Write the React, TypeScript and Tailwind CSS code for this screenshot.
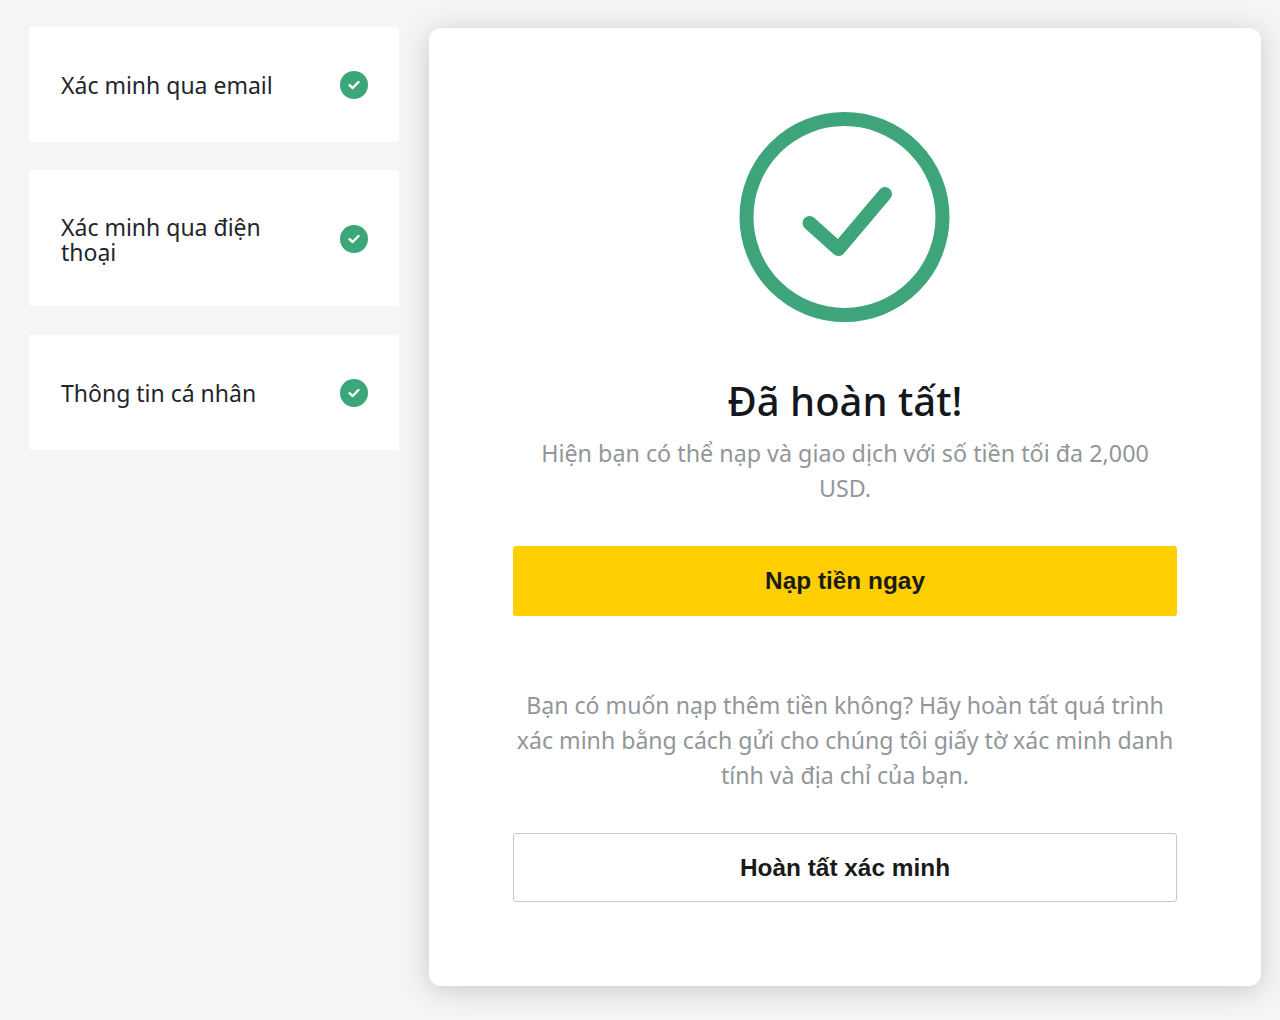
function StepCheck() {
  return (
    <svg width="28" height="28" viewBox="0 0 28 28" className="shrink-0">
      <circle cx="14" cy="14" r="14" fill="#3ba678" />
      <path d="M9.5 14.2l3.2 2.8 5.8-6" fill="none" stroke="#fff" strokeWidth="2.4" strokeLinecap="round" strokeLinejoin="round" />
    </svg>
  )
}

function StepCard({ label, className }: { label: string; className: string }) {
  return (
    <div className={`flex items-center justify-between rounded-[3px] bg-white pl-8 pr-[31px] ${className}`}>
      <span className="w-[240px] pt-[2px] text-[23px] leading-[25px] text-[#22262b]">{label}</span>
      <StepCheck />
    </div>
  )
}

export default function App() {
  return (
    <div className="flex h-[1020px] items-start gap-[30px] overflow-hidden bg-[#f3f5f7] pl-[29px] pt-[27px] font-['Noto_Sans',sans-serif]">
      <div className="flex w-[370px] flex-col">
        <StepCard label="Xác minh qua email" className="h-[115px]" />
        <StepCard label="Xác minh qua điện thoại" className="mt-[28px] h-[136px] pt-[2px]" />
        <StepCard label="Thông tin cá nhân" className="mt-[29px] h-[115px]" />
      </div>

      <div className="mt-px flex h-[958px] w-[832px] flex-col items-center rounded-xl bg-white px-[84px] pt-[84px] shadow-[0_4px_28px_rgba(0,0,0,0.18)]">
        <svg width="210" height="210" viewBox="0 0 210 210" className="shrink-0 overflow-visible">
          <circle cx="104.5" cy="105" r="98" fill="none" stroke="#3ea57b" strokeWidth="14" />
          <path d="M69.5 111l29 26 46.500-55" fill="none" stroke="#3ea57b" strokeWidth="14" strokeLinecap="round" strokeLinejoin="round" />
        </svg>

        <h1 className="mt-[51px] text-[40px] font-medium leading-[56px] text-[#14181d]">Đã hoàn tất!</h1>
        <p className="mt-[7px] w-full text-center text-[23.3px] leading-[35px] text-[#929699]">
          Hiện bạn có thể nạp và giao dịch với số tiền tối đa 2,000 USD.
        </p>
        <button
          type="button"
          className="mt-[40px] h-[70px] w-full shrink-0 rounded-[3px] bg-[#ffcf01] font-['Liberation_Sans',sans-serif] text-[24.4px] font-bold text-[#1a1a1a]"
        >
          Nạp tiền ngay
        </button>

        <p className="mt-[72px] w-full text-center text-[23.1px] leading-[35px] text-[#929699]">
          Bạn có muốn nạp thêm tiền không? Hãy hoàn tất quá trình xác minh bằng cách gửi cho chúng tôi giấy tờ xác minh danh tính và địa chỉ của bạn.
        </p>
        <button
          type="button"
          className="mt-[40px] h-[69px] w-full shrink-0 rounded-[3px] border border-[#c4c6c8] bg-white pt-px font-['Liberation_Sans',sans-serif] text-[24.4px] font-bold text-[#1a1a1a]"
        >
          Hoàn tất xác minh
        </button>
      </div>
    </div>
  )
}
